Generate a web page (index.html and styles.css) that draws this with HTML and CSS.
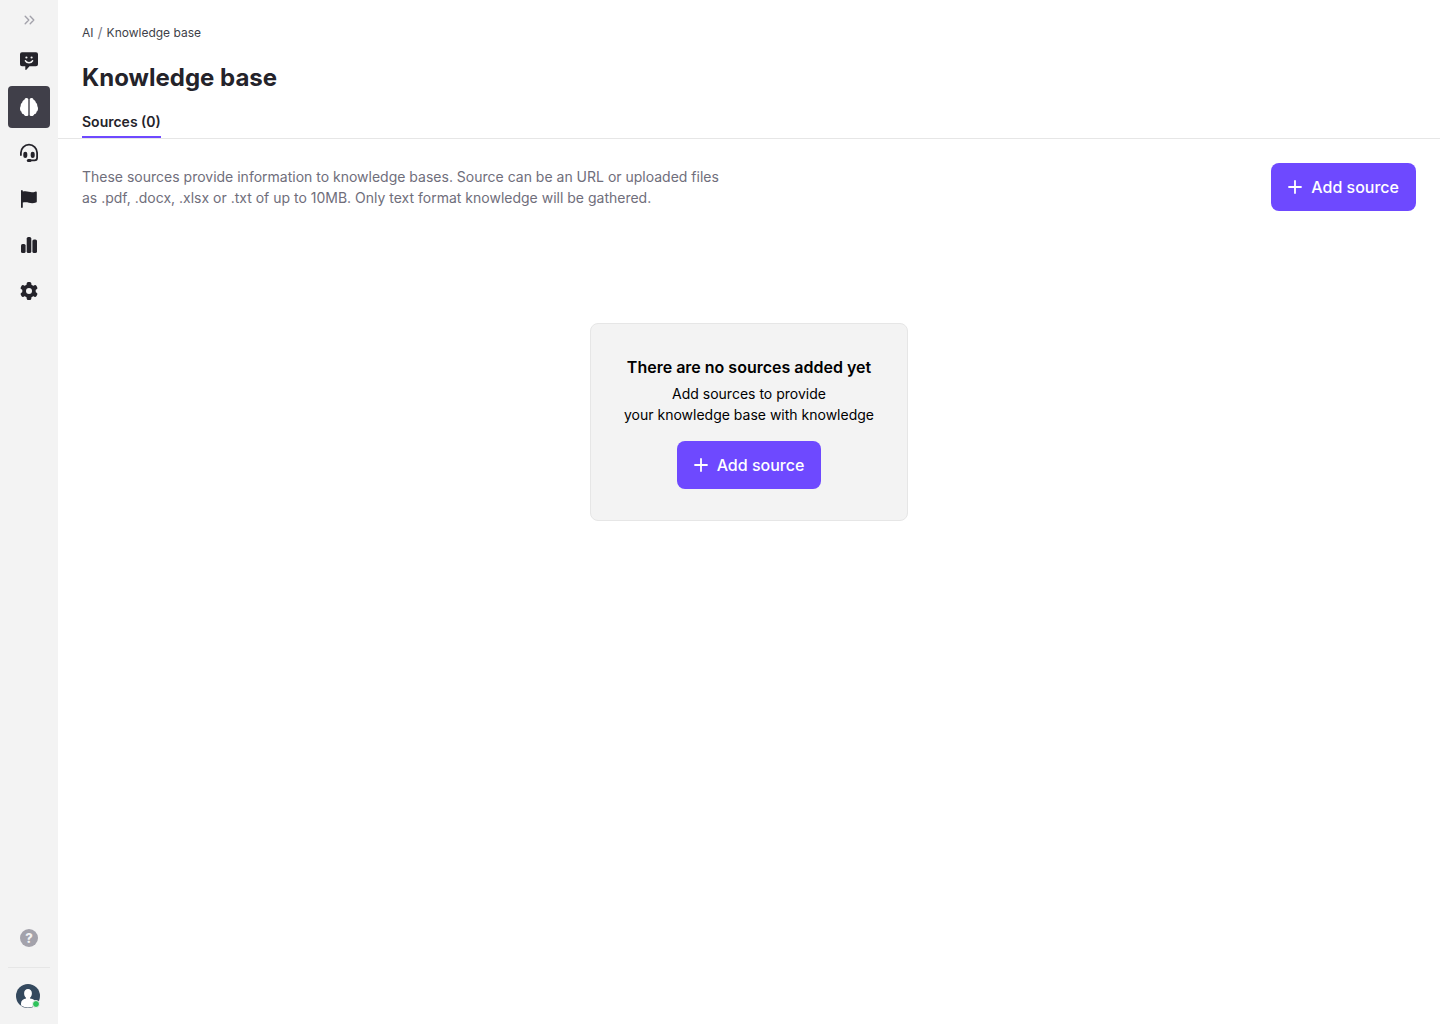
FILE: index.html
```html
<!DOCTYPE html>
<html lang="en">
<head>
    <meta charset="UTF-8">
    <meta name="viewport" content="width=device-width, initial-scale=1.0">
    <title>Knowledge base</title>
    <link rel="stylesheet" href="styles.css">
</head>
<body>
    <aside class="sidebar">
        <button type="button" class="sidebar-toggle" aria-label="Expand menu">
            <svg width="12" height="10" viewBox="0 0 12 10" fill="none" stroke="currentColor" stroke-width="1.4" stroke-linecap="round" stroke-linejoin="round">
                <path d="M2.2 1.2 5.8 5 2.2 8.8M7.2 1.2 10.8 5 7.2 8.8"/>
            </svg>
        </button>

        <nav class="sidebar-nav">
            <a href="#" class="nav-item" aria-label="Chatbots">
                <svg width="20" height="20" viewBox="0 0 20 20">
                    <path fill="currentColor" d="M3 1.3h14a2 2 0 0 1 2 2v10a2 2 0 0 1-2 2h-6.500l-3.400 3.600c-.3.3-.8.1-.8-.3v-3.300H3a2 2 0 0 1-2-2v-10a2 2 0 0 1 2-2z"/>
                    <circle cx="7.400" cy="6.500" r="1.100" fill="#f2f2f2"/>
                    <circle cx="12.600" cy="6.500" r="1.100" fill="#f2f2f2"/>
                    <path d="M6.500 9.800c1.400 2.500 5.600 2.500 7 0" fill="none" stroke="#f2f2f2" stroke-width="1.600" stroke-linecap="round"/>
                </svg>
            </a>
            <a href="#" class="nav-item active" aria-label="Knowledge base">
                <svg width="20" height="20" viewBox="0 0 20 20" fill="currentColor">
                    <path id="lobe" d="M9.300 2v16.200c-.5.6-1.200.9-2 .9-1.300 0-2.200-.8-2.500-1.900-1.400-.1-2.300-1.100-2.300-2.400C1.500 14.100 1 12.900 1 11.500c0-1 .2-1.800.7-2.500-.1-1.500.4-2.700 1.500-3.500.1-1.300.9-2.300 2.100-2.600C5.700 1.700 6.500 1.100 7.500 1.100c.8 0 1.400.3 1.800.9z"/>
                    <use href="#lobe" transform="matrix(-1 0 0 1 20 0)"/>
                </svg>
            </a>
            <a href="#" class="nav-item" aria-label="Support">
                <svg width="20" height="20" viewBox="0 0 20 20" fill="none" stroke="currentColor" stroke-linecap="round">
                    <path stroke-width="1.800" d="M1.900 12V9.800a8.100 8.100 0 0 1 16.200 0v5a2.600 2.600 0 0 1-2.600 2.600H10.500"/>
                    <path stroke-width="4" d="M6.300 10.700v2.200M13.700 10.700v2.200"/>
                    <path stroke-width="3" d="M9.300 17.500h1.700"/>
                </svg>
            </a>
            <a href="#" class="nav-item" aria-label="Goals">
                <svg width="20" height="20" viewBox="0 0 20 20" fill="currentColor">
                    <path d="M2.900 1c.6 0 .9.400.9.900v.7c2-.5 4-.4 6 .2 2.200.6 4.200.6 6.400-.1.900-.3 1.600.1 1.600.9v8.800c0 .5-.3.900-.8 1.100-2.400.9-4.800.9-7.200.2-2-.6-4-.6-6-.1v4.500c0 .5-.3.900-.9.900S2 18.600 2 18.100V1.900c0-.5.3-.9.900-.9z"/>
                </svg>
            </a>
            <a href="#" class="nav-item" aria-label="Analytics">
                <svg width="20" height="20" viewBox="0 0 20 20" fill="currentColor">
                    <rect x="2" y="9" width="4.600" height="9" rx="1.600"/>
                    <rect x="7.700" y="2" width="4.600" height="16" rx="1.600"/>
                    <rect x="13.400" y="4.500" width="4.600" height="13.500" rx="1.600"/>
                </svg>
            </a>
            <a href="#" class="nav-item" aria-label="Settings">
                <svg width="20" height="20" viewBox="0 0 20 20">
                    <g fill="currentColor">
                        <circle cx="10" cy="10" r="6.800"/>
                        <rect id="tooth" x="7.700" y="1" width="4.600" height="18" rx="1.500"/>
                        <use href="#tooth" transform="rotate(60 10 10)"/>
                        <use href="#tooth" transform="rotate(120 10 10)"/>
                    </g>
                    <circle cx="10" cy="10" r="3" fill="#f2f2f2"/>
                </svg>
            </a>
        </nav>

        <div class="sidebar-bottom">
            <button type="button" class="help" aria-label="Help">?</button>
            <button type="button" class="account" aria-label="Account">
                <svg width="24" height="24" viewBox="0 0 24 24">
                    <circle cx="12" cy="12" r="12" fill="#34495e"/>
                    <path fill="#fff" d="M12 5c2.400 0 3.900 1.700 3.900 4.200 0 2-.8 3.700-1.900 4.600v.8c3.400.4 5.900 1.900 6 4.600 0 .7-.1 1.200-.3 1.600A12 12 0 0 1 12 23.600a12 12 0 0 1-6.600-1.800c-.3-.7-.5-1.500-.4-2.600.2-2.700 2.400-4.200 5-4.600v-.8c-1.100-.9-1.900-2.600-1.900-4.600C8.100 6.700 9.600 5 12 5z"/>
                </svg>
                <span class="status"></span>
            </button>
        </div>
    </aside>

    <main class="main">
        <header class="header">
            <nav class="breadcrumbs">
                <a href="#">AI</a>
                <span class="separator">/</span>
                <a href="#">Knowledge base</a>
            </nav>
            <h1>Knowledge base</h1>
            <div class="tabs">
                <a href="#" class="tab">Sources (0)</a>
            </div>
        </header>

        <section class="content">
            <div class="intro">
                <p>These sources provide information to knowledge bases. Source can be an URL or uploaded files as .pdf, .docx, .xlsx or .txt of up to 10MB. Only text format knowledge will be gathered.</p>
                <button type="button" class="btn">
                    <svg width="14" height="14" viewBox="0 0 14 14" fill="none" stroke="currentColor" stroke-width="1.800" stroke-linecap="round">
                        <path d="M7 1v12M1 7h12"/>
                    </svg>
                    Add source
                </button>
            </div>

            <div class="empty">
                <h2>There are no sources added yet</h2>
                <p>Add sources to provide<br>your knowledge base with knowledge</p>
                <button type="button" class="btn">
                    <svg width="14" height="14" viewBox="0 0 14 14" fill="none" stroke="currentColor" stroke-width="1.800" stroke-linecap="round">
                        <path d="M7 1v12M1 7h12"/>
                    </svg>
                    Add source
                </button>
            </div>
        </section>
    </main>
</body>
</html>
```
FILE: styles.css
```css
* {
    box-sizing: border-box;
}

body {
    display: flex;
    min-height: 100vh;
    margin: 0;
    font-family: Inter, "Liberation Sans", sans-serif;
    font-size: 14px;
    line-height: 21px;
    color: #000;
    background: #fff;
}

h1, h2, p {
    margin: 0;
}

a {
    color: inherit;
    text-decoration: none;
}

button {
    padding: 0;
    border: 0;
    background: none;
    font: inherit;
    cursor: pointer;
}

svg {
    display: block;
    flex: none;
}

/* Sidebar */
.sidebar {
    display: flex;
    flex-direction: column;
    flex: none;
    width: 58px;
    padding: 0 8px;
    background: #f3f3f3;
}

.sidebar-toggle {
    display: flex;
    align-items: center;
    justify-content: center;
    height: 40px;
    color: #a3a2ab;
}

.sidebar-nav {
    display: flex;
    flex-direction: column;
    gap: 4px;
}

.nav-item {
    display: flex;
    align-items: center;
    justify-content: center;
    height: 42px;
    border-radius: 4px;
    color: #24232a;
}

.nav-item.active {
    background: #403f49;
    color: #fff;
}

.sidebar-bottom {
    display: flex;
    flex-direction: column;
    margin-top: auto;
}

.help {
    align-self: center;
    width: 18px;
    height: 18px;
    margin-bottom: 20px;
    border-radius: 50%;
    background: #a3a2ab;
    color: #f3f3f3;
    font-size: 13px;
    font-weight: 800;
    line-height: 18px;
}

.account {
    position: relative;
    display: flex;
    padding: 16px 8px;
    border-top: 1px solid #e6e6e6;
}

.status {
    position: absolute;
    left: 24px;
    bottom: 16px;
    width: 8px;
    height: 8px;
    border: 1px solid #f3f3f3;
    border-radius: 50%;
    background: #2fc25b;
}

/* Page header */
.main {
    flex: 1;
    min-width: 0;
}

.header {
    padding: 24px 24px 0;
    border-bottom: 1px solid #e6e6e6;
}

.breadcrumbs {
    display: flex;
    gap: 4px;
    font-size: 12px;
    line-height: 18px;
    color: #403f49;
}

.separator {
    color: #7c7b87;
    font-size: 14px;
}

h1 {
    margin-top: 18px;
    font-size: 24px;
    font-weight: 700;
    line-height: 36px;
    color: #24232a;
}

.tabs {
    display: flex;
    margin-top: 15px;
}

.tab {
    padding-bottom: 4px;
    border-bottom: 2px solid #6e49ff;
    font-weight: 600;
    color: #24232a;
}

/* Content */
.content {
    display: flex;
    flex-direction: column;
    gap: 112px;
    padding: 24px;
}

.intro {
    display: flex;
    align-items: center;
    justify-content: space-between;
    gap: 24px;
}

.intro p {
    max-width: 640px;
    color: #6f6e7b;
}

.btn {
    display: flex;
    align-items: center;
    gap: 9px;
    flex: none;
    height: 48px;
    padding: 0 17px;
    border-radius: 8px;
    background: #6e49ff;
    color: #fff;
    font-size: 16px;
    font-weight: 500;
    line-height: 24px;
}

/* Empty state */
.empty {
    display: flex;
    flex-direction: column;
    align-items: center;
    align-self: center;
    padding: 31px 33px;
    border: 1px solid #e6e6e6;
    border-radius: 8px;
    background: #f3f3f3;
    text-align: center;
}

.empty h2 {
    font-size: 16px;
    font-weight: 600;
    line-height: 24px;
}

.empty p {
    margin: 4px 0 16px;
}
```
